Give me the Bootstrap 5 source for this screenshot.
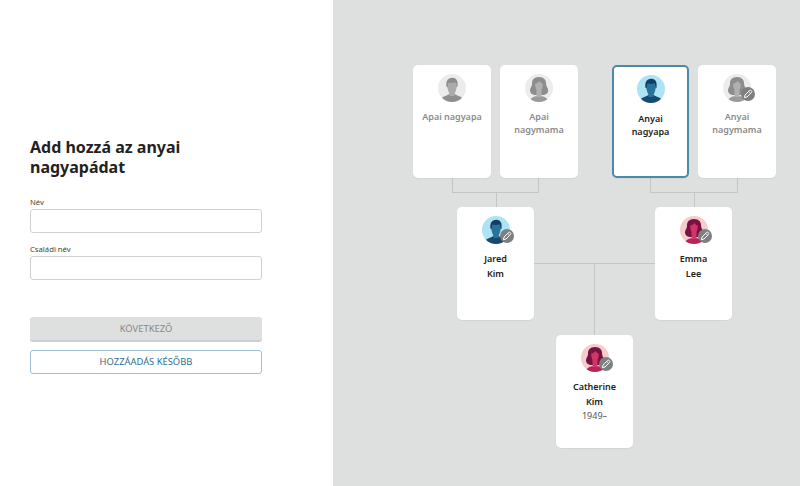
<!DOCTYPE html>
<html lang="hu">
<head>
    <meta charset="UTF-8">
    <meta name="viewport" content="width=device-width, initial-scale=1.0">
    <title>Családfa</title>
    <link href="https://cdn.jsdelivr.net/npm/bootstrap@5.3.0/dist/css/bootstrap.min.css" rel="stylesheet">
    <style>
        html, body { height: 100%; }
        body { font-family: "Noto Sans", "Liberation Sans", sans-serif; color: #222; overflow: hidden; }

        .form-side { width: 333px; height: 486px; padding: 137px 71px 0 30px; flex: none; }
        .form-side h1 { font-size: 16px; line-height: 20px; font-weight: 700; margin-bottom: 19px; color: #222; }
        .form-side label { font-size: 7.7px; line-height: 12px; margin-bottom: 1px; display: block; color: #444; }
        .field-box { height: 24px; border: 1px solid #cfd2d2; border-radius: 3px; padding: 0 8px; font-size: 10px; }
        .field-wrap { margin-bottom: 10px; }
        .next-btn, .later-btn { display: block; width: 100%; font-size: 9.4px; text-transform: uppercase; border-radius: 3px; padding: 0; }
        .next-btn { height: 25px; line-height: 24px; margin-top: 37px; background: #dee0df; border: 0; border-bottom: 2px solid #cdcfce; color: #888; }
        .next-btn:disabled { background: #dee0df; border-color: #cdcfce; color: #888; opacity: 1; }
        .later-btn { height: 24px; line-height: 22px; margin-top: 8px; background: #fff; border: 1px solid #9fc1cf; color: #2f6f92; }

        .tree-side { position: relative; flex: 1; height: 486px; background: #dee0df; }
        .person { position: absolute; width: 77px; height: 113px; background: #fff; border-radius: 5px; padding-top: 9px; text-align: center; font-size: 9px; line-height: 14.5px; font-weight: 600; color: #222; box-shadow: 0 1px 1px rgba(0,0,0,.05); }
        .person.ghost { width: 78px; color: #8b8b8b; line-height: 12.8px; }
        .person.picked { border: 2px solid #4d89a9; padding-top: 8px; line-height: 12.8px; }
        .person .years { font-weight: 400; color: #555; line-height: 13px; }
        .avatar-wrap { position: relative; width: 28px; height: 28px; margin: 0 auto 8px; }
        .avatar-wrap svg.face { width: 28px; height: 28px; display: block; }
        .pen-badge { position: absolute; left: 18px; top: 13px; width: 14px; height: 14px; }
        .ghost .avatar-wrap { margin-bottom: 9px; }
        .picked .avatar-wrap { margin-bottom: 10px; }

        .wire { position: absolute; background: #c4c6c5; }
        .man-grey { --bg: #ececec; --skin: #ababab; --hair: #8d8d8d; --body: #8f8f8f; }
        .woman-grey { --bg: #ececec; --skin: #b0b0b0; --hair: #8d8d8d; --body: #9a9a9a; }
        .man-blue { --bg: #ade3f5; --skin: #2b7299; --hair: #123f63; --body: #174a70; }
        .woman-red { --bg: #f6cbcc; --skin: #cf3566; --hair: #791241; --body: #b92458; }
    </style>
</head>
<body class="d-flex">
    <svg width="0" height="0" class="position-absolute">
        <symbol id="man" viewBox="0 0 28 28">
            <clipPath id="clipMan"><circle cx="14" cy="14" r="14"/></clipPath>
            <g clip-path="url(#clipMan)">
                <rect width="28" height="28" style="fill:var(--bg)"/>
                <path d="M2 28c.5-4 3-5.500 6.500-6.500L11.500 20h5l3 1.500c3.500 1 6 2.500 6.500 6.500z" style="fill:var(--body)"/>
                <path d="M8.800 7c0 8 2.400 14.500 5.200 14.500S19.200 15 19.200 7z" style="fill:var(--skin)"/>
                <rect x="11.500" y="16" width="5" height="6" style="fill:var(--skin)"/>
                <path d="M8.500 13C7.800 7.500 9.500 4 14.200 3.800c4.500-.2 6 3.500 5.300 9.200l-.9-.2c.1-2-.2-3.500-1.100-4.500-2 .8-5 .8-6.800.2-.7 1-.9 2.500-.9 4.300z" style="fill:var(--hair)"/>
            </g>
        </symbol>
        <symbol id="woman" viewBox="0 0 28 28">
            <clipPath id="clipWoman"><circle cx="14" cy="14" r="14"/></clipPath>
            <g clip-path="url(#clipWoman)">
                <rect width="28" height="28" style="fill:var(--bg)"/>
                <path d="M14 3c-5 0-7.300 3.200-7 7 .2 2.500-2.300 4-2 6.800.3 2.500 2.300 4 4.300 4.200h9.400c2.200-.2 4.500-1.700 4.500-4.200.2-2.800-2.200-4.300-2.100-6.800.2-3.800-2.100-7-7.100-7z" style="fill:var(--hair)"/>
                <path d="M4.500 28c.5-3.500 3-5 6-5.800h7c3 .8 5.500 2.300 6 5.800z" style="fill:var(--body)"/>
                <path d="M10.200 9.500c1.800-.3 3.500-1.300 4.500-2.500.7 1.300 2 2.300 3 2.700.3 4-1.200 7.300-3.700 7.300s-4-3.500-3.800-7.500z" style="fill:var(--skin)"/>
                <path d="M11.500 15.500h5v6.500l-2.500 1.500-2.500-1.500z" style="fill:var(--skin)"/>
            </g>
        </symbol>
        <symbol id="pen" viewBox="0 0 14 14">
            <circle cx="7" cy="7" r="7" fill="#7d7f80"/>
            <path d="M3.400 10.600l.7-2.600 4.600-4.600c.4-.4 1-.4 1.400 0l.5.500c.4.400.4 1 0 1.400L6 10l-2.600.6z" fill="none" stroke="#fff" stroke-width="1"/>
            <path d="M7.800 4.500l1.700 1.700" stroke="#fff" stroke-width=".8"/>
        </symbol>
    </svg>

    <div class="form-side bg-white">
        <h1>Add hozzá az anyai nagyapádat</h1>
        <form>
            <div class="field-wrap">
                <label for="firstName">Név</label>
                <input id="firstName" type="text" class="form-control field-box">
            </div>
            <div class="field-wrap">
                <label for="lastName">Családi név</label>
                <input id="lastName" type="text" class="form-control field-box">
            </div>
            <button type="button" class="btn next-btn" disabled>Következő</button>
            <button type="button" class="btn later-btn">Hozzáadás később</button>
        </form>
    </div>

    <div class="tree-side">
        <!-- connectors, tree-side starts at x=333 -->
        <div class="wire" style="left:119px;top:178px;width:1px;height:14px"></div>
        <div class="wire" style="left:205px;top:178px;width:1px;height:14px"></div>
        <div class="wire" style="left:119px;top:192px;width:87px;height:1px"></div>
        <div class="wire" style="left:163px;top:192px;width:1px;height:15px"></div>
        <div class="wire" style="left:317px;top:178px;width:1px;height:14px"></div>
        <div class="wire" style="left:404px;top:178px;width:1px;height:14px"></div>
        <div class="wire" style="left:317px;top:192px;width:88px;height:1px"></div>
        <div class="wire" style="left:361px;top:192px;width:1px;height:15px"></div>
        <div class="wire" style="left:201px;top:263px;width:121px;height:1px"></div>
        <div class="wire" style="left:261px;top:263px;width:1px;height:72px"></div>

        <div class="person ghost" style="left:80px;top:65px">
            <div class="avatar-wrap man-grey"><svg class="face"><use href="#man"/></svg></div>
            <div>Apai nagyapa</div>
        </div>
        <div class="person ghost" style="left:167px;top:65px">
            <div class="avatar-wrap woman-grey"><svg class="face"><use href="#woman"/></svg></div>
            <div>Apai</div><div>nagymama</div>
        </div>
        <div class="person picked" style="left:279px;top:65px">
            <div class="avatar-wrap man-blue"><svg class="face"><use href="#man"/></svg></div>
            <div>Anyai</div><div>nagyapa</div>
        </div>
        <div class="person ghost" style="left:365px;top:65px">
            <div class="avatar-wrap woman-grey"><svg class="face"><use href="#woman"/></svg><svg class="pen-badge"><use href="#pen"/></svg></div>
            <div>Anyai</div><div>nagymama</div>
        </div>
        <div class="person" style="left:124px;top:207px">
            <div class="avatar-wrap man-blue"><svg class="face"><use href="#man"/></svg><svg class="pen-badge"><use href="#pen"/></svg></div>
            <div>Jared</div><div>Kim</div>
        </div>
        <div class="person" style="left:322px;top:207px">
            <div class="avatar-wrap woman-red"><svg class="face"><use href="#woman"/></svg><svg class="pen-badge"><use href="#pen"/></svg></div>
            <div>Emma</div><div>Lee</div>
        </div>
        <div class="person" style="left:223px;top:335px">
            <div class="avatar-wrap woman-red"><svg class="face"><use href="#woman"/></svg><svg class="pen-badge"><use href="#pen"/></svg></div>
            <div>Catherine</div><div>Kim</div><div class="years">1949–</div>
        </div>
    </div>

    <script src="https://cdn.jsdelivr.net/npm/bootstrap@5.3.0/dist/js/bootstrap.bundle.min.js"></script>
</body>
</html>
